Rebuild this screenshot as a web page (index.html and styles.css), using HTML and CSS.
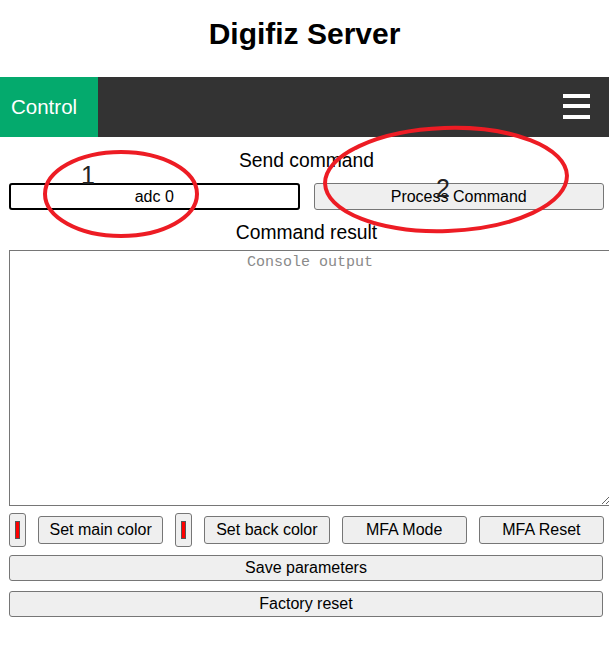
FILE: index.html
```html
<!DOCTYPE html>
<html lang="en">
<head>
<meta charset="utf-8">
<title>Digifiz Server</title>
<link rel="stylesheet" href="styles.css">
</head>
<body>
<h1 class="title">Digifiz Server</h1>
<nav class="topnav">
  <a class="nav-active" href="#">Control</a>
  <a class="nav-icon" href="#" aria-label="Menu">
    <svg width="27" height="25" viewBox="0 0 27 25"><rect x="0" y="0" width="27" height="4" fill="#fff"/><rect x="0" y="10" width="27" height="4" fill="#fff"/><rect x="0" y="21" width="27" height="4" fill="#fff"/></svg>
  </a>
</nav>
<main class="panel">
  <h3 class="label label-send">Send command</h3>
  <div class="cmd-row">
    <input class="cmd-input" type="text" value="adc 0">
    <button class="btn">Process Command</button>
  </div>
  <h3 class="label label-result">Command result</h3>
  <textarea class="console" placeholder="Console output"></textarea>
  <div class="tools">
    <input class="swatch" type="color" value="#ff0000">
    <button class="btn btn-tool">Set main color</button>
    <input class="swatch" type="color" value="#ff0000">
    <button class="btn btn-tool">Set back color</button>
    <button class="btn btn-tool">MFA Mode</button>
    <button class="btn btn-tool">MFA Reset</button>
  </div>
  <button class="btn btn-wide btn-save">Save parameters</button>
  <button class="btn btn-wide btn-factory">Factory reset</button>
</main>
<svg class="annotations" width="609" height="656" viewBox="0 0 609 656">
  <ellipse cx="121" cy="194" rx="76" ry="42" fill="none" stroke="#ed1c24" stroke-width="4"/>
  <ellipse cx="446" cy="179.5" rx="121" ry="51.5" fill="none" stroke="#ed1c24" stroke-width="4" transform="rotate(-2 446 179.5)"/>
  <text x="81" y="184" class="anno-num">1</text>
  <text x="436" y="197" class="anno-num">2</text>
</svg>
</body>
</html>
```
FILE: styles.css
```css
html, body {
  margin: 0;
  padding: 0;
  background: #fff;
}
body {
  font-family: "Liberation Sans", Arial, sans-serif;
  color: #000;
  position: relative;
  overflow: hidden;
  width: 609px;
  height: 656px;
}
.title {
  margin: 0;
  padding: 17px 0 26px;
  font-size: 30px;
  line-height: 34px;
  font-weight: bold;
  text-align: center;
}
.topnav {
  display: flex;
  justify-content: space-between;
  align-items: stretch;
  height: 60px;
  background: #333;
}
.nav-active {
  display: flex;
  align-items: center;
  padding: 0 16px 0 11px;
  width: 98px;
  box-sizing: border-box;
  background: #04aa6d;
  color: #fff;
  font-size: 20.5px;
  text-decoration: none;
}
.nav-icon {
  display: flex;
  align-items: center;
  padding: 0 19px 2px 0;
}
.nav-icon svg {
  display: block;
}
.panel {
  padding: 0 5px 0 9px;
}
.label {
  margin: 0;
  font-size: 19.3px;
  line-height: 22px;
  font-weight: normal;
  text-align: center;
}
.label-send {
  padding-top: 13px;
  margin-bottom: 11px;
}
.label-result {
  margin-top: 12px;
  margin-bottom: 6px;
}
.cmd-row {
  display: grid;
  grid-template-columns: 1fr 1fr;
  column-gap: 14px;
}
.cmd-input {
  box-sizing: border-box;
  height: 27px;
  margin: 0;
  padding: 0 4px;
  border: 2px solid #000;
  border-radius: 3px;
  font-family: "Liberation Sans", Arial, sans-serif;
  font-size: 16px;
  text-align: center;
  color: #000;
  background: #fff;
}
.btn {
  box-sizing: border-box;
  height: 27px;
  margin: 0;
  padding: 0 6px;
  border: 1px solid #767676;
  border-radius: 3px;
  background: #efefef;
  font-family: "Liberation Sans", Arial, sans-serif;
  font-size: 16px;
  color: #000;
}
.console {
  display: block;
  box-sizing: border-box;
  width: calc(100% + 7px);
  height: 256px;
  margin: 0;
  padding: 3px 4px;
  border: 1px solid #767676;
  border-radius: 0;
  font-family: "Liberation Mono", "DejaVu Sans Mono", monospace;
  font-size: 15px;
  line-height: 17px;
  text-align: center;
  resize: both;
}
.console::placeholder {
  color: #8a8a8a;
}
.tools {
  display: flex;
  align-items: center;
  gap: 12px;
  margin-top: 7px;
}
.swatch {
  box-sizing: border-box;
  flex: 0 0 17px;
  width: 17px;
  height: 34px;
  margin: 0;
  padding: 0;
  border: 1px solid #767676;
  border-radius: 3px;
  background: #efefef;
}
.swatch::-webkit-color-swatch-wrapper {
  padding: 7px 5px;
}
.swatch::-webkit-color-swatch {
  border: 1px solid #555;
  border-radius: 0;
}
.btn-tool {
  flex: 1 1 0;
  height: 28px;
}
.btn-wide {
  display: block;
  width: calc(100% - 1px);
  height: 26px;
}
.btn-save {
  margin-top: 8px;
}
.btn-factory {
  margin-top: 10px;
}
.annotations {
  position: absolute;
  top: 0;
  left: 0;
  pointer-events: none;
}
.anno-num {
  font-family: "Liberation Sans", Arial, sans-serif;
  font-size: 25px;
  fill: #222;
}
```
